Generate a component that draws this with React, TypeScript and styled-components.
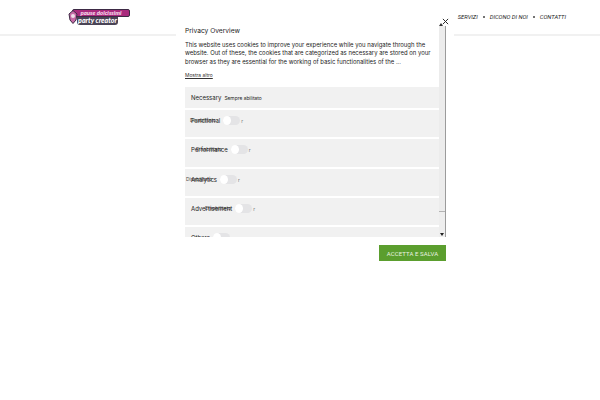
import React from "react";
import styled, { createGlobalStyle } from "styled-components";

const Global = createGlobalStyle`
  html, body { margin: 0; padding: 0; background: #fff; }
  body { width: 600px; height: 400px; overflow: hidden; font-family: "Inter", "Liberation Sans", sans-serif; color: #222; }
`;
const Page = styled.div`position: relative; width: 600px; height: 400px; background: #fff; overflow: hidden;`;
const Header = styled.header`
  height: 36px; box-sizing: border-box; border-bottom: 2px solid #f1f1f1;
  display: flex; align-items: flex-start; justify-content: space-between; padding: 9px 34px 0 68px;
`;
const Logo = styled.div`
  position: relative; width: 62px; height: 16px; display: flex; flex-direction: column; align-items: flex-start;
  font-family: "Lato", sans-serif; font-weight: 900; font-style: italic;
`;
const LogoTop = styled.div`
  width: 58px; height: 8px; margin-left: 4px; background: #a92a7d; border-radius: 2px; border: 1px solid #3d2a45; box-sizing: border-box;
  color: #f6dcec; font-size: 6px; line-height: 6px; text-align: center; white-space: nowrap; overflow: hidden;
`;
const LogoBottom = styled.div`
  width: 41px; height: 8px; margin-left: 9px; background: #4a4456; border-radius: 0 0 3px 3px;
  color: #fff; font-size: 7px; text-align: center; white-space: nowrap; line-height: 7px;
`;
const LogoGem = styled.svg`position: absolute; left: 0; top: 1px;`;
const Nav = styled.nav`
  display: flex; gap: 5px; align-items: center; height: 16px; font-family: "Roboto", sans-serif;
  font-style: italic; font-size: 5.8px; color: #222; white-space: nowrap;
`;
const Dot = styled.span`width: 2px; height: 2px; border-radius: 50%; background: #444;`;

const Modal = styled.section`
  position: absolute; left: 176px; top: 0; width: 278px; height: 268px; background: #fff;
  box-sizing: border-box; padding: 26px 8px 0 9px; display: flex; flex-direction: column;
`;
const Close = styled.button`
  position: absolute; right: 5px; top: 17px; border: 0; padding: 0; background: none; width: 8px; height: 8px;
  display: flex; align-items: center; justify-content: center;
`;
const Body = styled.div`display: flex; height: 211px; position: relative;`;
const Scroller = styled.div`width: 254px; flex: none; height: 211px; overflow-y: clip; overflow-x: visible; padding-top: 0;`;
const Title = styled.h2`margin: 1px 0 0; font-weight: 400; font-size: 6.65px; line-height: 9px; color: #222;`;
const Paragraph = styled.p`margin: 5px 0 0; font-size: 5.95px; line-height: 8.4px; color: #222; white-space: nowrap;`;
const More = styled.a`display: block; margin-top: 5px; font-size: 4.9px; line-height: 8px; color: #333; text-decoration: underline;`;
const Rows = styled.div`margin-top: 8px; display: flex; flex-direction: column; gap: 2px;`;
const Row = styled.div<{ $h: number }>`
  height: ${(p) => p.$h}px; background: #f1f1f1; flex: none; box-sizing: border-box;
  padding: 6px 0 0 6px; display: flex; align-items: flex-start; gap: 3px;
`;
const LabelStack = styled.div`display: grid;`;
const Label = styled.span`grid-area: 1 / 1; font-size: 6px; line-height: 9px; color: #222; white-space: nowrap;`;
const Ghost = styled.span<{ $shift: number }>`
  grid-area: 1 / 1; width: 0; margin-left: ${(p) => p.$shift}px; font-size: 5px; line-height: 9px; color: #444; white-space: nowrap;
`;
const Note = styled.span`font-size: 4.9px; line-height: 10px; color: #222; white-space: nowrap;`;
const Toggle = styled.span`
  position: relative; width: 17px; height: 9px; border-radius: 5px; background: #e4e4e6; flex: none;
  &::before { content: ""; position: absolute; left: 0; top: 0; width: 8px; height: 9px; border-radius: 50%; background: #fff; }
  &::after { content: "r"; position: absolute; left: 18px; top: 2px; font-size: 5px; line-height: 6px; color: #777; }
`;
const Track = styled.div`
  width: 7px; height: 211px; background: #eee; border-right: 1px solid #9b9b9b; box-sizing: border-box; position: relative; flex: none;
`;
const Thumb = styled.div`width: 6px; height: 185px; background: #ececec; border-bottom: 1px solid #b3b3b3;`;
const ArrowTop = styled.div`
  position: absolute; left: 0; top: -3px; width: 0; height: 0; border-left: 2px solid transparent; border-right: 2px solid transparent; border-bottom: 3px solid #333;
`;
const ArrowBottom = styled.div`
  position: absolute; left: 1px; bottom: 1px; width: 0; height: 0; border-left: 2px solid transparent; border-right: 2px solid transparent; border-top: 3px solid #222;
`;
const Footer = styled.div`display: flex; justify-content: flex-end; margin-top: 8px;`;
const Accept = styled.button`
  width: 67px; height: 16px; border: 0; padding: 0; background: #5b9e2e; color: #e9f3e0;
  font-family: "Roboto", sans-serif; font-size: 6px; letter-spacing: 0.1px; text-transform: uppercase;
`;

const cookieRows = [
  { name: "Functional", h: 27, shift: -1 },
  { name: "Performance", h: 28, shift: 5 },
  { name: "Analytics", h: 27, shift: -5 },
  { name: "Advertisement", h: 27, shift: 14 },
  { name: "Others", h: 26, shift: 0 },
];

export default function App() {
  return (
    <Page>
      <Global />
      <Header>
        <Logo>
          <LogoGem width="10" height="14" viewBox="0 0 10 14">
            <path d="M1 4 L5 0.5 L9 4 L8 10 L5 13.5 L2 10 Z" fill="#c66aa6" stroke="#3d2a45" strokeWidth="1" />
            <circle cx="5" cy="6" r="2" fill="#efe0ea" />
          </LogoGem>
          <LogoTop>pause dolcissimi</LogoTop>
          <LogoBottom>party creator</LogoBottom>
        </Logo>
        <Nav>
          <span>SERVIZI</span><Dot /><span>DICONO DI NOI</span><Dot /><span>CONTATTI</span>
        </Nav>
      </Header>
      <Modal>
        <Close aria-label="Chiudi">
          <svg width="7" height="7" viewBox="0 0 8 8"><path d="M1 1 L7 7 M7 1 L1 7" stroke="#222" strokeWidth="1.1" /></svg>
        </Close>
        <Body>
          <Scroller>
            <Title>Privacy Overview</Title>
            <Paragraph>
              This website uses cookies to improve your experience while you navigate through the<br />
              website. Out of these, the cookies that are categorized as necessary are stored on your<br />
              browser as they are essential for the working of basic functionalities of the ...
            </Paragraph>
            <More>Mostra altro</More>
            <Rows>
              <Row $h={21}>
                <Label>Necessary</Label>
                <Note>Sempre abilitato</Note>
              </Row>
              {cookieRows.map((r) => (
                <Row key={r.name} $h={r.h}>
                  <LabelStack>
                    {r.name !== "Others" && <Ghost $shift={r.shift}>Disabilitato</Ghost>}
                    <Label>{r.name}</Label>
                  </LabelStack>
                  <Toggle />
                </Row>
              ))}
            </Rows>
          </Scroller>
          <Track>
            <Thumb />
            <ArrowTop />
            <ArrowBottom />
          </Track>
        </Body>
        <Footer>
          <Accept>Accetta e salva</Accept>
        </Footer>
      </Modal>
    </Page>
  );
}
